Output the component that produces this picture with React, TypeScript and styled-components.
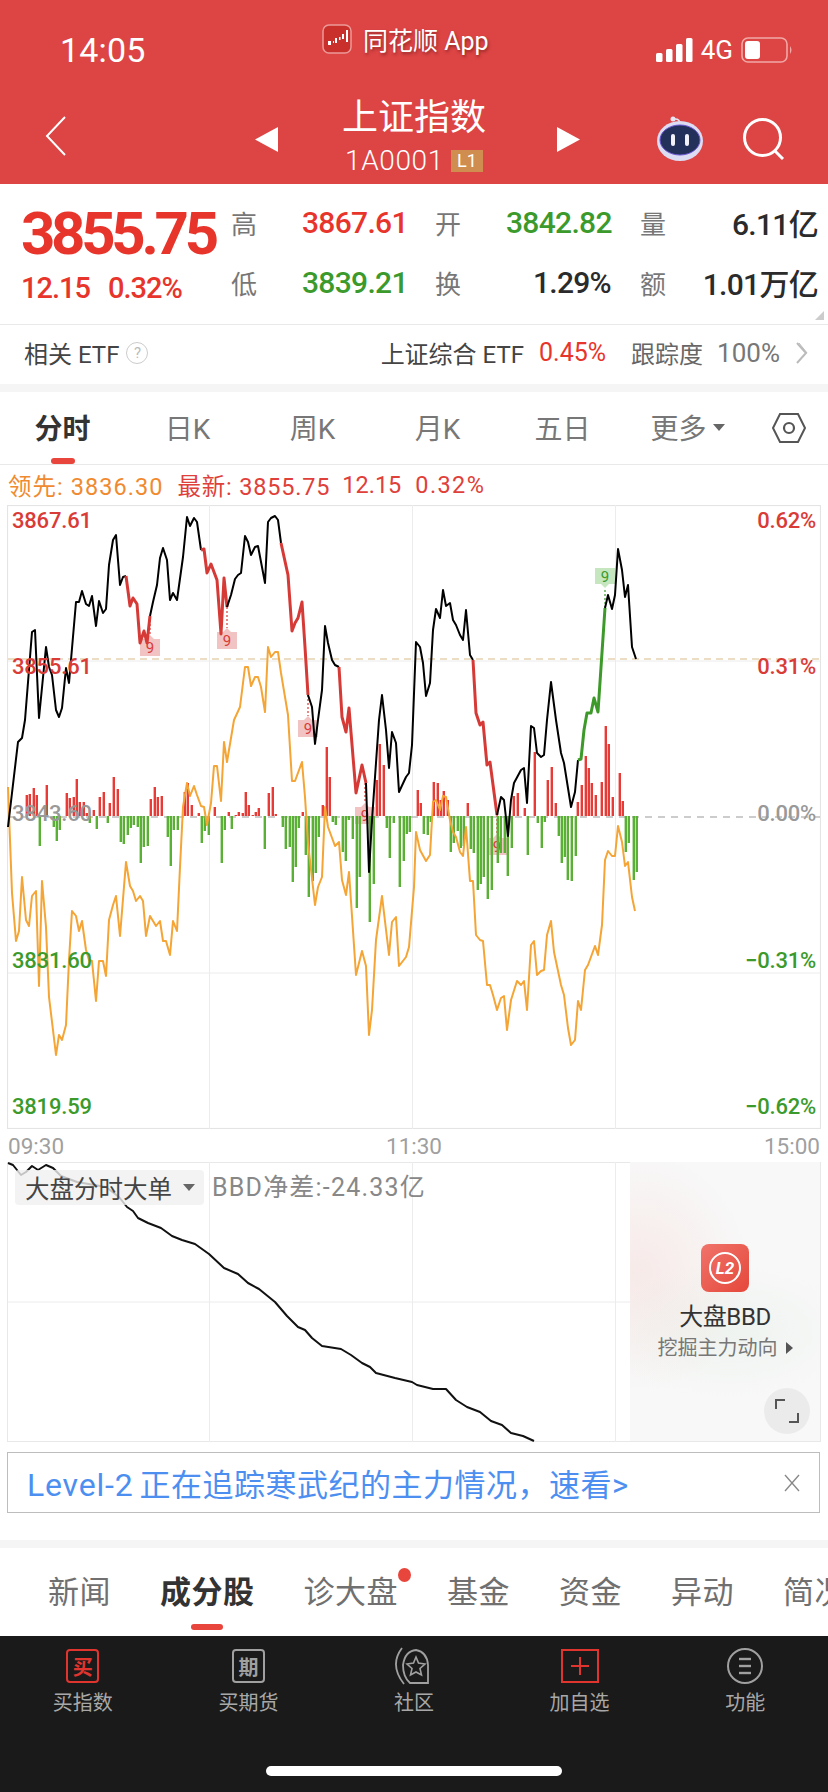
import React from "react";
import styled, { createGlobalStyle } from "styled-components";

const SANS = `Roboto, "Noto Sans CJK SC", sans-serif`;
const RED = "#e8352c";
const CHART_RED = "#d93b37";
const GREEN = "#3b9a2b";

// price line, cut where the colour changes (page coordinates)
const priceLine = [
  { color: "#000", w: 2, pts: "8,827 18,742 22,738 25,720 32,632 35,630 39,718 46,647 49,667 52,675 56,710 59,717 62,708 66,668 69,683 76,602 79,602 82,591 86,604 89,606 92,596 96,626 99,601 103,613 106,609 109,565 113,540 116,535 120,585 123,577 126,576" },
  { color: "#d63a36", w: 3, pts: "126,576 130,606 133,598 137,604 140,643 144,631 147,643 150,616" },
  { color: "#000", w: 2, pts: "150,616 153,602 157,585 160,558 163,548 167,560 170,600 173,593 177,600 183,557 187,517 190,526 194,518 197,522 201,550" },
  { color: "#d63a36", w: 3, pts: "201,550 204,549 207,573 211,564 214,572 217,580 221,634 224,578 227,607" },
  { color: "#000", w: 2, pts: "227,607 231,595 235,579 238,575 241,573 245,536 248,542 251,555 255,547 258,546 265,583 268,522 271,518 275,516 278,520 281,543" },
  { color: "#d63a36", w: 3, pts: "281,543 288,575 292,631 295,623 298,618 302,602 305,647 308,695" },
  { color: "#000", w: 2, pts: "308,695 312,707 315,744 318,720 322,690 325,626 328,643 332,660 335,665 339,667" },
  { color: "#d63a36", w: 3, pts: "339,667 342,717 346,732 349,708 356,793 362,765 366,783" },
  { color: "#000", w: 2, pts: "366,783 369,872 372,820 379,720 382,695 386,730 389,768 392,732 396,743 399,792 406,777 409,773 412,745 416,642 420,647 423,663 426,696 430,683 433,630 436,609 440,618 443,590 446,606 450,603 453,620 456,625 460,635 463,640 466,610 470,655 473,660" },
  { color: "#d63a36", w: 3, pts: "473,660 476,713 480,725 483,722 487,765 490,762 497,815" },
  { color: "#000", w: 2, pts: "497,815 501,797 504,800 508,836 511,800 514,783 521,770 524,768 527,803 531,726 534,728 537,753 541,757 544,755 547,720 551,682 556,720 561,753 564,763 571,807 575,792 578,760" },
  { color: "#3d9a2a", w: 3, pts: "578,760 581,759 584,730 587,713 591,713 594,698 598,712 605,608" },
  { color: "#000", w: 2, pts: "605,608 608,595 612,609 615,595 618,549 622,570 625,597 628,585 632,647 636,659" },
];

const orangeLine =
  "8,787 12,893 16,941 19,931 22,877 26,920 29,926 32,896 36,891 39,986 42,881 46,927 49,997 56,1055 59,1035 62,1040 66,1025 69,960 72,911 76,916 79,931 82,921 86,950 89,960 92,961 96,1001 99,961 103,961 106,976 109,920 113,905 116,896 120,936 126,862 130,886 133,891 136,901 140,896 143,901 146,936 150,916 156,926 160,921 163,941 166,941 170,955 173,921 177,931 180,867 183,807 187,783 190,796 194,786 197,795 201,806 204,807 207,825 211,803 214,766 217,766 221,801 224,742 227,762 234,720 240,707 245,667 248,667 251,686 255,677 258,677 261,687 265,712 268,647 271,657 275,652 278,652 281,673 288,715 292,781 295,781 302,762 305,797 308,843 315,905 318,887 322,877 325,807 328,827 335,846 339,842 342,880 346,895 349,872 356,975 362,951 366,966 369,1035 372,1010 376,940 382,896 389,955 392,922 396,917 399,966 406,957 409,947 414,887 416,832 420,850 426,861 430,855 433,802 436,800 440,810 443,796 446,797 450,820 453,832 456,837 460,852 463,856 466,827 470,881 473,881 476,935 480,940 483,941 487,985 490,985 493,995 497,1010 501,998 504,996 507,1030 511,1000 517,981 521,985 524,981 527,1010 531,945 534,941 537,975 541,971 544,970 547,935 551,921 554,952 561,985 564,995 568,1028 571,1045 575,1040 578,1001 581,1010 585,970 588,965 595,946 598,955 602,925 605,860 608,851 612,856 615,856 618,826 622,842 625,866 628,862 632,897 635,911";

const bbdLine =
  "8,1163 13,1165 21,1175 26,1172 32,1166 38,1170 46,1165 53,1168 61,1176 77,1182 106,1187 119,1197 127,1207 133,1211 138,1218 148,1223 161,1228 172,1236 182,1240 195,1244 209,1254 224,1268 238,1274 248,1283 259,1289 275,1302 287,1316 298,1327 305,1330 312,1338 322,1346 341,1349 351,1355 362,1363 370,1367 376,1373 395,1378 412,1382 417,1385 433,1389 446,1389 456,1400 467,1407 480,1412 491,1421 502,1425 511,1433 523,1436 534,1441";

// [x, end of bar] read off the picture
const redBars: number[][] = [
  [25, 795], [28, 794], [32, 788], [35, 795], [45, 785], [65, 793], [68, 798], [72, 797], [75, 779], [78, 802], [82, 802], [85, 813], [92, 810], [98, 797], [102, 792], [108, 803], [112, 777], [116, 789], [149, 799], [153, 787], [156, 797], [160, 796], [183, 792], [186, 783], [190, 805], [197, 813], [213, 807], [227, 812], [234, 815], [237, 812], [241, 813], [244, 792], [247, 805], [251, 815], [254, 812], [257, 808], [267, 793], [271, 787], [274, 814], [277, 816], [301, 812], [321, 805], [325, 747], [328, 777], [375, 780], [378, 744], [382, 765],
  [416, 790], [419, 803], [432, 782], [436, 783], [439, 800], [442, 791], [446, 800], [466, 803], [512, 796], [516, 793], [523, 808], [533, 752], [546, 780], [550, 767], [554, 803], [576, 802], [580, 785], [584, 756], [587, 768], [590, 783], [594, 795], [600, 782], [604, 726], [607, 744], [611, 797], [618, 773], [621, 801],
];
const greenBars: number[][] = [
  [38, 846], [52, 827], [55, 841], [58, 830], [88, 823], [95, 829], [106, 823], [119, 842], [122, 844], [126, 835], [129, 828], [132, 825], [136, 827], [139, 863], [142, 847], [146, 846], [166, 837], [169, 866], [172, 830], [176, 830], [200, 843], [203, 831], [207, 835], [220, 863], [223, 830], [230, 829], [263, 849], [281, 827], [284, 849], [288, 847], [291, 882], [294, 867], [297, 828], [304, 855], [307, 897], [311, 881], [314, 873], [317, 837], [331, 822], [334, 825], [341, 852], [344, 861], [347, 820], [351, 839], [355, 908], [358, 877], [368, 922], [372, 884], [385, 828], [388, 858], [392, 823], [398, 887], [402, 861], [405, 834], [408, 832],
  [422, 834], [426, 835], [429, 822], [449, 852], [452, 843], [456, 831], [459, 848], [462, 846], [469, 849], [472, 853], [476, 890], [479, 884], [482, 877], [486, 899], [490, 890], [496, 863], [499, 853], [503, 853], [506, 876], [510, 848], [526, 855], [536, 823], [540, 848], [543, 822], [557, 836], [560, 863], [563, 857], [566, 880], [570, 881], [574, 856], [624, 852], [627, 843], [632, 880], [635, 872],
];

// y is the top of the tag, lineY where its dotted stem starts
const markers = [
  { x: 150, y: 635, lineY: 616, tone: "red" },
  { x: 227, y: 628, lineY: 607, tone: "red" },
  { x: 308, y: 716, lineY: 695, tone: "red" },
  { x: 365, y: 803, lineY: 783, tone: "red" },
  { x: 497, y: 834, lineY: 815, tone: "red" },
  { x: 605, y: 568, lineY: 608, tone: "green" },
];

const axisLabels = [
  { left: "3867.61", right: "0.62%", top: 6, color: CHART_RED },
  { left: "3855.61", right: "0.31%", top: 152, color: CHART_RED },
  { left: "3843.60", right: "0.00%", top: 299, color: "#999" },
  { left: "3831.60", right: "−0.31%", top: 446, color: GREEN },
  { left: "3819.59", right: "−0.62%", top: 592, color: GREEN },
];

const GlobalStyle = createGlobalStyle`
  body {
    margin: 0;
    background: #fff;
    font-family: ${SANS};
  }
`;

const Page = styled.div`
  width: 828px;
  height: 1792px;
  overflow: hidden;
  display: flex;
  flex-direction: column;
  background: #fff;
`;

const Header = styled.header`
  height: 184px;
  background: #dd4444;
  color: #fff;
  display: flex;
  flex-direction: column;
`;

const StatusBar = styled.div`
  height: 88px;
  display: flex;
  align-items: center;
  padding: 11px 34px 0 60px;
  box-sizing: border-box;
`;

const Time = styled.div`
  font-size: 34px;
  font-weight: 400;
  width: 262px;
  letter-spacing: 0.2px;
`;

const AppName = styled.div`
  display: flex;
  align-items: center;
  gap: 11px;
  font-size: 25px;
  margin-top: -21px;
  text-shadow: 1px 2px 3px rgba(90, 20, 20, 0.55);
  flex: 1;
`;

const StatusRight = styled.div`
  display: flex;
  align-items: center;
  gap: 8px;
  font-size: 26px;
`;

const NavBar = styled.div`
  flex: 1;
  display: flex;
  align-items: center;
  padding-left: 45px;
`;

const NavMiddle = styled.div`
  width: 325px;
  margin-left: 188px;
  display: flex;
  align-items: center;
  justify-content: space-between;
  margin-top: 6px;
`;

const NavTitle = styled.div`
  display: flex;
  flex-direction: column;
  align-items: center;
  margin-top: -6px;
  margin-right: 7px;
`;

const TitleText = styled.div`
  font-size: 36px;
  line-height: 44px;
`;

const TitleCode = styled.div`
  display: flex;
  align-items: center;
  gap: 7px;
  font-size: 28px;
  line-height: 30px;
  margin-top: 6px;
  font-weight: 300;
  letter-spacing: 0.6px;
`;

const LevelBadge = styled.span`
  width: 32px;
  height: 22px;
  background: #cf8e50;
  font-size: 18px;
  line-height: 22px;
  text-align: center;
  letter-spacing: 0;
  font-weight: 400;
`;

const NavTools = styled.div`
  display: flex;
  align-items: center;
  gap: 39px;
  margin-left: 76px;
  margin-top: 6px;
`;

const QuoteBoard = styled.section`
  height: 141px;
  box-sizing: border-box;
  border-bottom: 1px solid #e9e9e9;
  display: flex;
  padding: 8px 10px 0 21px;
  position: relative;
`;

const PriceBlock = styled.div`
  width: 210px;
  color: ${RED};
`;

const BigPrice = styled.div`
  font-size: 60px;
  font-weight: 700;
  line-height: 76px;
  margin-top: 4px;
  letter-spacing: -4.3px;
`;

const PriceChange = styled.div`
  display: flex;
  gap: 18px;
  font-size: 29px;
  font-weight: 500;
  line-height: 36px;
  margin-top: -2px;
  letter-spacing: -1px;
`;

const QuoteGrid = styled.div`
  flex: 1;
  display: grid;
  grid-template-columns: 71px 133px 71px 105px 29px 1fr;
  grid-auto-rows: 60px;
  align-items: center;
`;

const QuoteLabel = styled.span`
  font-size: 26px;
  color: #777;
`;

const QuoteValue = styled.span<{ $color?: string; $right?: boolean }>`
  font-size: 30px;
  font-weight: 500;
  letter-spacing: -0.7px;
  color: ${(p) => p.$color || "#2b2b2b"};
  text-align: ${(p) => (p.$right ? "right" : "left")};
`;

const GridSpacer = styled.span``;

const QuoteRightBox = styled.span`
  display: flex;
  align-items: center;
  justify-content: space-between;
`;

const CornerFold = styled.div`
  position: absolute;
  right: 4px;
  bottom: 4px;
  width: 0;
  height: 0;
  border-left: 9px solid transparent;
  border-bottom: 9px solid #ccc;
`;

const EtfRow = styled.div`
  height: 59px;
  box-sizing: border-box;
  padding: 0 20px 4px 24px;
  display: flex;
  align-items: center;
  font-size: 24px;
  color: #444;
`;

const HelpMark = styled.span`
  width: 20px;
  height: 20px;
  margin-left: 7px;
  border: 1.5px solid #ccc;
  border-radius: 50%;
  font-size: 15px;
  line-height: 20px;
  text-align: center;
  color: #bbb;
`;

const EtfRight = styled.div`
  margin-left: auto;
  display: flex;
  align-items: center;
`;

const EtfPercent = styled.span<{ $color: string; $gap: number; $size?: number }>`
  display: flex;
  color: ${(p) => p.$color};
  margin-left: ${(p) => p.$gap}px;
  font-size: ${(p) => p.$size || 24}px;
`;

const SectionGap = styled.div`
  height: 8px;
  background: #f5f5f5;
  flex-shrink: 0;
`;

const PeriodTabs = styled.nav`
  height: 73px;
  box-sizing: border-box;
  border-bottom: 1px solid #e9e9e9;
  display: flex;
  flex-shrink: 0;
`;

const PeriodTab = styled.div<{ $active?: boolean }>`
  width: 125px;
  flex-shrink: 0;
  display: flex;
  align-items: center;
  justify-content: center;
  gap: 6px;
  position: relative;
  padding-bottom: 2px;
  box-sizing: border-box;
  font-size: 28px;
  font-weight: ${(p) => (p.$active ? 700 : 400)};
  color: ${(p) => (p.$active ? "#333" : "#777")};
`;

const TabLine = styled.i<{ $width: number }>`
  position: absolute;
  left: 50%;
  bottom: 0;
  width: ${(p) => p.$width}px;
  height: 6px;
  margin-left: ${(p) => -p.$width / 2}px;
  border-radius: 3px;
  background: #e8453c;
`;

const Caret = styled.i<{ $color: string; $size: number }>`
  width: 0;
  height: 0;
  border-left: ${(p) => p.$size}px solid transparent;
  border-right: ${(p) => p.$size}px solid transparent;
  border-top: ${(p) => p.$size + 1}px solid ${(p) => p.$color};
`;

const HexBox = styled.div`
  flex: 1;
  display: flex;
  align-items: center;
  justify-content: center;
`;

const InfoRow = styled.div`
  height: 40px;
  display: flex;
  align-items: center;
  padding-left: 8px;
  font-size: 23.5px;
  color: #e0403a;
  flex-shrink: 0;
`;

const InfoItem = styled.span<{ $color?: string; $gap?: number; $spacing: number }>`
  color: ${(p) => p.$color || "inherit"};
  margin-left: ${(p) => p.$gap || 0}px;
  letter-spacing: ${(p) => p.$spacing}px;
`;

const ChartBox = styled.div`
  position: relative;
  height: 624px;
  margin-left: 7px;
  width: 814px;
  flex-shrink: 0;
`;

const ChartSvg = styled.svg`
  display: block;
  width: 100%;
  height: 100%;
`;

const AxisText = styled.span<{ $color: string; $top: number; $side: "left" | "right" }>`
  position: absolute;
  top: ${(p) => p.$top}px;
  ${(p) => p.$side}: 5px;
  color: ${(p) => p.$color};
  font-size: 22px;
  line-height: 20px;
  font-weight: 500;
  letter-spacing: -0.2px;
`;

const TimeAxis = styled.div`
  height: 33px;
  display: flex;
  justify-content: space-between;
  align-items: center;
  padding: 0 8px;
  font-size: 22.5px;
  color: #a0a0a0;
  flex-shrink: 0;
`;

const BbdBox = styled.div`
  position: relative;
  height: 280px;
  width: 814px;
  margin-left: 7px;
  flex-shrink: 0;
`;

const BbdChip = styled.div`
  position: absolute;
  left: 8px;
  top: 8px;
  width: 189px;
  height: 35px;
  box-sizing: border-box;
  padding-left: 10px;
  display: flex;
  align-items: center;
  gap: 11px;
  background: rgba(240, 240, 240, 0.8);
  border-radius: 4px;
  font-size: 24.5px;
  color: #444;
`;

const BbdSummary = styled.div`
  position: absolute;
  left: 205px;
  top: 8px;
  line-height: 35px;
  font-size: 25px;
  color: #888;
  letter-spacing: 1.2px;
`;

const BbdPanel = styled.div`
  position: absolute;
  right: 1px;
  top: 0;
  bottom: 1px;
  width: 190px;
  display: flex;
  flex-direction: column;
  align-items: center;
  padding-top: 82px;
  box-sizing: border-box;
  background:
    radial-gradient(ellipse 110px 120px at 10px 110px, rgba(240, 160, 150, 0.16), transparent),
    radial-gradient(ellipse 130px 70px at 100px 170px, rgba(200, 225, 205, 0.2), transparent),
    #f8f8f8;
`;

const PanelTitle = styled.div`
  margin-top: 10px;
  font-size: 24px;
  line-height: 30px;
  letter-spacing: -0.4px;
  color: #333;
`;

const PanelHint = styled.div`
  margin-top: 3px;
  display: flex;
  align-items: center;
  gap: 8px;
  font-size: 20px;
  line-height: 26px;
  color: #777;
`;

const CaretRight = styled.i`
  width: 0;
  height: 0;
  border-top: 6px solid transparent;
  border-bottom: 6px solid transparent;
  border-left: 7px solid #555;
`;

const ExpandButton = styled.div`
  position: absolute;
  right: 10px;
  bottom: 7px;
  width: 46px;
  height: 46px;
  border-radius: 50%;
  background: #ebebeb;
  display: flex;
  align-items: center;
  justify-content: center;
`;

const Banner = styled.div`
  height: 61px;
  margin: 10px 8px 27px 7px;
  box-sizing: border-box;
  border: 1.5px solid #bdbdbd;
  display: flex;
  align-items: center;
  justify-content: space-between;
  padding: 0 19px;
  font-size: 31px;
  letter-spacing: 0.5px;
  color: #4d8ff0;
  flex-shrink: 0;
`;

const BannerLevel = styled.span`
  font-size: 32px;
  letter-spacing: 0.8px;
  margin-right: 6px;
`;

const NewsTabs = styled.nav`
  height: 88px;
  display: flex;
  gap: 49px;
  padding-left: 48px;
  overflow: hidden;
  flex-shrink: 0;
`;

const NewsTab = styled.div<{ $active?: boolean }>`
  position: relative;
  flex-shrink: 0;
  font-size: 31px;
  line-height: 90px;
  letter-spacing: 0.5px;
  font-weight: ${(p) => (p.$active ? 700 : 400)};
  color: ${(p) => (p.$active ? "#333" : "#707070")};
`;

const NewsLine = styled(TabLine)`
  bottom: 6px;
`;

const RedDot = styled.i`
  position: absolute;
  right: -13px;
  top: 20px;
  width: 13px;
  height: 14px;
  border-radius: 50%;
  background: #e8453c;
`;

const BottomBar = styled.footer`
  flex: 1;
  background: #1a1a1a;
  position: relative;
  display: grid;
  grid-template-columns: repeat(5, 1fr);
  padding-top: 12px;
  align-items: start;
`;

const BarItem = styled.div`
  display: flex;
  flex-direction: column;
  align-items: center;
  font-size: 20px;
  color: #a8a8a8;
`;

const BarIcon = styled.div`
  height: 36px;
  display: flex;
  align-items: center;
  justify-content: center;
  margin-bottom: 5px;
`;

const BarLabel = styled.span`
  line-height: 28px;
`;

const TextIcon = styled.span<{ $color: string }>`
  width: 33px;
  height: 34px;
  box-sizing: border-box;
  border: 2px solid ${(p) => p.$color};
  border-radius: 4px;
  display: flex;
  align-items: center;
  justify-content: center;
  font-size: 20px;
  font-weight: 700;
  color: ${(p) => p.$color};
`;

const HomeIndicator = styled.div`
  position: absolute;
  left: 266px;
  bottom: 16px;
  width: 296px;
  height: 10px;
  border-radius: 5px;
  background: #fff;
`;

const LogoIcon = () => (
  <svg width="30" height="30" viewBox="0 0 30 30">
    <rect x="1" y="1" width="28" height="28" rx="6" fill="#c9302c" stroke="#eb9a98" strokeWidth="1.5" />
    <g fill="#fff">
      <rect x="6" y="17" width="3" height="4" />
      <rect x="11" y="17" width="1" height="2" />
      <rect x="13" y="14" width="2" height="5" />
      <rect x="17" y="13" width="1.5" height="3" />
      <rect x="20" y="10" width="2" height="5" />
      <rect x="24" y="6" width="2" height="12" />
    </g>
  </svg>
);

const SignalIcon = () => (
  <svg width="37" height="24" viewBox="0 0 37 24" fill="#fff">
    <rect x="0" y="15" width="6.5" height="9" rx="1.5" />
    <rect x="10" y="11" width="6.5" height="13" rx="1.5" />
    <rect x="20" y="6" width="6.5" height="18" rx="1.5" />
    <rect x="30" y="0" width="6.5" height="24" rx="1.5" />
  </svg>
);

const BatteryIcon = () => (
  <svg width="53" height="26" viewBox="0 0 53 26">
    <rect x="1" y="1" width="45" height="24" rx="6" fill="none" stroke="#f0a9a6" strokeWidth="1.6" />
    <rect x="4" y="4" width="15" height="18" rx="3" fill="#fff" />
    <path d="M49 9 Q52 13 49 17 Z" fill="#f0a9a6" />
  </svg>
);

const BackIcon = () => (
  <svg width="22" height="40" viewBox="0 0 22 40">
    <polyline points="20,1 2,20 20,39" fill="none" stroke="#fff" strokeWidth="2" />
  </svg>
);

const ArrowIcon = ({ dir }: { dir: "left" | "right" }) => (
  <svg width="23" height="25" viewBox="0 0 23 25">
    <polygon points={dir === "left" ? "23,0 23,25 0,12.5" : "0,0 0,25 23,12.5"} fill="#fff" />
  </svg>
);

const RobotIcon = () => (
  <svg width="48" height="46" viewBox="0 0 48 46">
    <circle cx="17" cy="3" r="2.5" fill="#e6e6f5" />
    <path d="M19 3 Q24 3 24 8" fill="none" stroke="#e6e6f5" strokeWidth="1.5" />
    <ellipse cx="24" cy="25" rx="23" ry="20" fill="#dcdcf3" />
    <ellipse cx="24" cy="24" rx="20" ry="15" fill="#22305a" stroke="#6a55d0" strokeWidth="1" />
    <rect x="15" y="18" width="4" height="12" rx="2" fill="#f2f2f8" />
    <rect x="29" y="18" width="4" height="12" rx="2" fill="#f2f2f8" />
  </svg>
);

const SearchIcon = () => (
  <svg width="42" height="42" viewBox="0 0 42 42" fill="none" stroke="#fff" strokeWidth="3">
    <circle cx="19.5" cy="19.5" r="18" />
    <line x1="32" y1="33" x2="40" y2="41" />
  </svg>
);

const ChevronIcon = () => (
  <svg width="12" height="22" viewBox="0 0 12 22" fill="none" stroke="#bbb" strokeWidth="2">
    <polyline points="1,1 10,11 1,21" />
    <line x1="3" y1="1" x2="11" y2="11" strokeWidth="1" />
  </svg>
);

const HexIcon = () => (
  <svg width="36" height="32" viewBox="0 0 36 32" fill="none" stroke="#555" strokeWidth="2">
    <polygon points="9,2 27,2 34,16 27,30 9,30 2,16" />
    <circle cx="18" cy="16" r="5" strokeWidth="2.2" />
  </svg>
);

const L2Icon = () => (
  <svg width="48" height="48" viewBox="0 0 48 48">
    <defs>
      <linearGradient id="l2bg" x1="0" y1="0" x2="1" y2="1">
        <stop offset="0" stopColor="#f0736a" />
        <stop offset="1" stopColor="#e5483a" />
      </linearGradient>
    </defs>
    <rect width="48" height="48" rx="8" fill="url(#l2bg)" />
    <circle cx="24" cy="24" r="15" fill="none" stroke="#fff" strokeWidth="2" />
    <text x="24" y="30" textAnchor="middle" fontFamily="Roboto, sans-serif" fontSize="17" fontWeight="700" fontStyle="italic" fill="#fff">
      L2
    </text>
  </svg>
);

const ExpandIcon = () => (
  <svg width="24" height="24" viewBox="0 0 24 24" fill="none" stroke="#555" strokeWidth="2">
    <polyline points="1,10 1,1 10,1" />
    <polyline points="23,14 23,23 14,23" />
  </svg>
);

const CloseIcon = () => (
  <svg width="16" height="18" viewBox="0 0 16 18" stroke="#888" strokeWidth="1.4">
    <line x1="1" y1="1" x2="15" y2="17" />
    <line x1="15" y1="1" x2="1" y2="17" />
  </svg>
);

const CommunityIcon = () => (
  <svg width="42" height="38" viewBox="0 0 42 38" fill="none" stroke="#a0a0a0" strokeWidth="1.8">
    <path d="M35 36 L35 18 Q34 5 23 3 Q12 4 10 18 Q10 30 17 36 Z" />
    <path d="M9 1 Q-4 18 11 37" />
    <polygon points="23,10 25.5,16 32,17 27,21.5 28.5,28 23,25 17.5,28 19,21.5 14,17 20.5,16" strokeWidth="1.6" />
  </svg>
);

const PlusBoxIcon = () => (
  <svg width="38" height="34" viewBox="0 0 38 34" fill="none" stroke="#e0352f" strokeWidth="2">
    <rect x="1" y="1" width="36" height="32" />
    <line x1="19" y1="8" x2="19" y2="26" />
    <line x1="10" y1="17" x2="28" y2="17" />
  </svg>
);

const MenuIcon = () => (
  <svg width="36" height="36" viewBox="0 0 36 36" fill="none" stroke="#a0a0a0" strokeWidth="2">
    <circle cx="18" cy="18" r="17" />
    <line x1="12" y1="11" x2="24" y2="11" strokeWidth="2.4" />
    <line x1="12" y1="18" x2="24" y2="18" strokeWidth="2.4" />
    <line x1="12" y1="25" x2="24" y2="25" strokeWidth="2.4" />
  </svg>
);

const PriceChart = () => (
  <ChartSvg viewBox="7 505 814 624">
    <rect x="7.5" y="505.5" width="813" height="623" fill="#fff" stroke="#e4e4e4" strokeWidth="1.2" />
    <g stroke="#ececec" strokeWidth="1">
      <line x1="209.5" y1="505" x2="209.5" y2="1129" />
      <line x1="412.5" y1="505" x2="412.5" y2="1129" />
      <line x1="615.5" y1="505" x2="615.5" y2="1129" />
      <line x1="8" y1="661" x2="820" y2="661" />
      <line x1="8" y1="973" x2="820" y2="973" />
    </g>
    <line x1="8" y1="659" x2="820" y2="659" stroke="#d8bd8c" strokeWidth="1.2" strokeDasharray="7 5" />
    <line x1="8" y1="817" x2="820" y2="817" stroke="#999" strokeWidth="1.2" strokeDasharray="7 6" />
    {markers.map((m) => {
      const color = m.tone === "red" ? CHART_RED : GREEN;
      const tag =
        m.tone === "red"
          ? `M${m.x - 10} ${m.y + 4} h6 l4 -4 l4 4 h6 v17 h-20 Z`
          : `M${m.x - 10} ${m.y} h20 v16 h-6 l-4 4 l-4 -4 h-6 Z`;
      return (
        <g key={m.x}>
          <line
            x1={m.x}
            y1={m.lineY}
            x2={m.x}
            y2={m.tone === "red" ? m.y : m.y + 20}
            stroke={color}
            strokeWidth="1.2"
            strokeDasharray="2 2"
          />
          <path d={tag} fill={m.tone === "red" ? "#f0bcbc" : "#bfe3b8"} opacity="0.9" />
          <text
            x={m.x}
            y={m.tone === "red" ? m.y + 18 : m.y + 14}
            textAnchor="middle"
            fontSize="15"
            fontFamily="Roboto, sans-serif"
            fill={color}
          >
            9
          </text>
        </g>
      );
    })}
    {redBars.map(([x, y]) => (
      <rect key={"r" + x} x={x + 0.6} y={y} width="2.4" height={816 - y} fill="#e83a36" />
    ))}
    {greenBars.map(([x, y]) => (
      <rect key={"g" + x} x={x + 0.6} y={816} width="2.4" height={y - 816} fill="#5aaf35" />
    ))}
    <polyline points={orangeLine} fill="none" stroke="#f4a535" strokeWidth="2" strokeLinejoin="round" />
    {priceLine.map((seg) => (
      <polyline
        key={seg.pts}
        points={seg.pts}
        fill="none"
        stroke={seg.color}
        strokeWidth={seg.w}
        strokeLinejoin="round"
      />
    ))}
  </ChartSvg>
);

const BbdChart = () => (
  <ChartSvg viewBox="7 1162 814 280">
    <rect x="7.5" y="1162.5" width="813" height="279" fill="#fff" stroke="#e8e8e8" />
    <g stroke="#ececec">
      <line x1="209.5" y1="1162" x2="209.5" y2="1442" />
      <line x1="412.5" y1="1162" x2="412.5" y2="1442" />
      <line x1="615.5" y1="1162" x2="615.5" y2="1442" />
      <line x1="8" y1="1302" x2="820" y2="1302" />
    </g>
    <polyline points={bbdLine} fill="none" stroke="#111" strokeWidth="2" strokeLinejoin="round" />
  </ChartSvg>
);

function QuoteRight({ label, value }: { label: string; value: string }) {
  return (
    <QuoteRightBox>
      <QuoteLabel>{label}</QuoteLabel>
      <QuoteValue $right>{value}</QuoteValue>
    </QuoteRightBox>
  );
}

const App = () => {
  return (
    <Page>
      <GlobalStyle />
      <Header>
        <StatusBar>
          <Time>14:05</Time>
          <AppName>
            <LogoIcon />
            同花顺 App
          </AppName>
          <StatusRight>
            <SignalIcon />
            4G
            <BatteryIcon />
          </StatusRight>
        </StatusBar>
        <NavBar>
          <BackIcon />
          <NavMiddle>
            <ArrowIcon dir="left" />
            <NavTitle>
              <TitleText>上证指数</TitleText>
              <TitleCode>
                1A0001
                <LevelBadge>L1</LevelBadge>
              </TitleCode>
            </NavTitle>
            <ArrowIcon dir="right" />
          </NavMiddle>
          <NavTools>
            <RobotIcon />
            <SearchIcon />
          </NavTools>
        </NavBar>
      </Header>

      <QuoteBoard>
        <PriceBlock>
          <BigPrice>3855.75</BigPrice>
          <PriceChange>
            <span>12.15</span>
            <span>0.32%</span>
          </PriceChange>
        </PriceBlock>
        <QuoteGrid>
          <QuoteLabel>高</QuoteLabel>
          <QuoteValue $color={RED}>3867.61</QuoteValue>
          <QuoteLabel>开</QuoteLabel>
          <QuoteValue $color={GREEN} $right>3842.82</QuoteValue>
          <GridSpacer />
          <QuoteRight label="量" value="6.11亿" />
          <QuoteLabel>低</QuoteLabel>
          <QuoteValue $color={GREEN}>3839.21</QuoteValue>
          <QuoteLabel>换</QuoteLabel>
          <QuoteValue $right>1.29%</QuoteValue>
          <GridSpacer />
          <QuoteRight label="额" value="1.01万亿" />
        </QuoteGrid>
        <CornerFold />
      </QuoteBoard>

      <EtfRow>
        相关 ETF
        <HelpMark>?</HelpMark>
        <EtfRight>
          上证综合 ETF
          <EtfPercent $color="#e8352c" $gap={15} $size={25}>0.45%</EtfPercent>
          <EtfPercent $color="#666" $gap={25}>跟踪度</EtfPercent>
          <EtfPercent $color="#777" $gap={14} $size={26}>100%</EtfPercent>
          <EtfPercent $color="#777" $gap={16}><ChevronIcon /></EtfPercent>
        </EtfRight>
      </EtfRow>
      <SectionGap />

      <PeriodTabs>
        <PeriodTab $active>
          分时
          <TabLine $width={24} />
        </PeriodTab>
        <PeriodTab>日K</PeriodTab>
        <PeriodTab>周K</PeriodTab>
        <PeriodTab>月K</PeriodTab>
        <PeriodTab>五日</PeriodTab>
        <PeriodTab>
          更多
          <Caret $color="#666" $size={6} />
        </PeriodTab>
        <HexBox>
          <HexIcon />
        </HexBox>
      </PeriodTabs>

      <InfoRow>
        <InfoItem $color="#f08a30" $spacing={1.05}>领先: 3836.30</InfoItem>
        <InfoItem $gap={14} $spacing={0.8}>最新: 3855.75</InfoItem>
        <InfoItem $gap={12} $spacing={0}>12.15</InfoItem>
        <InfoItem $gap={14} $spacing={1.4}>0.32%</InfoItem>
      </InfoRow>

      <ChartBox>
        <PriceChart />
        {axisLabels.map((a) => (
          <React.Fragment key={a.left}>
            <AxisText $side="left" $top={a.top} $color={a.color}>{a.left}</AxisText>
            <AxisText $side="right" $top={a.top} $color={a.color}>{a.right}</AxisText>
          </React.Fragment>
        ))}
      </ChartBox>

      <TimeAxis>
        <span>09:30</span>
        <span>11:30</span>
        <span>15:00</span>
      </TimeAxis>

      <BbdBox>
        <BbdChart />
        <BbdChip>
          大盘分时大单
          <Caret $color="#666" $size={6} />
        </BbdChip>
        <BbdSummary>BBD净差:-24.33亿</BbdSummary>
        <BbdPanel>
          <L2Icon />
          <PanelTitle>大盘BBD</PanelTitle>
          <PanelHint>
            挖掘主力动向
            <CaretRight />
          </PanelHint>
          <ExpandButton>
            <ExpandIcon />
          </ExpandButton>
        </BbdPanel>
      </BbdBox>

      <Banner>
        <span>
          <BannerLevel>Level-2</BannerLevel>正在追踪寒武纪的主力情况，速看&gt;
        </span>
        <CloseIcon />
      </Banner>

      <SectionGap />

      <NewsTabs>
        <NewsTab>新闻</NewsTab>
        <NewsTab $active>
          成分股
          <NewsLine $width={32} />
        </NewsTab>
        <NewsTab>
          诊大盘
          <RedDot />
        </NewsTab>
        <NewsTab>基金</NewsTab>
        <NewsTab>资金</NewsTab>
        <NewsTab>异动</NewsTab>
        <NewsTab>简况</NewsTab>
      </NewsTabs>

      <BottomBar>
        <BarItem>
          <BarIcon><TextIcon $color="#e0352f">买</TextIcon></BarIcon>
          <BarLabel>买指数</BarLabel>
        </BarItem>
        <BarItem>
          <BarIcon><TextIcon $color="#a0a0a0">期</TextIcon></BarIcon>
          <BarLabel>买期货</BarLabel>
        </BarItem>
        <BarItem>
          <BarIcon><CommunityIcon /></BarIcon>
          <BarLabel>社区</BarLabel>
        </BarItem>
        <BarItem>
          <BarIcon><PlusBoxIcon /></BarIcon>
          <BarLabel>加自选</BarLabel>
        </BarItem>
        <BarItem>
          <BarIcon><MenuIcon /></BarIcon>
          <BarLabel>功能</BarLabel>
        </BarItem>
        <HomeIndicator />
      </BottomBar>
    </Page>
  );
};

export default App;
